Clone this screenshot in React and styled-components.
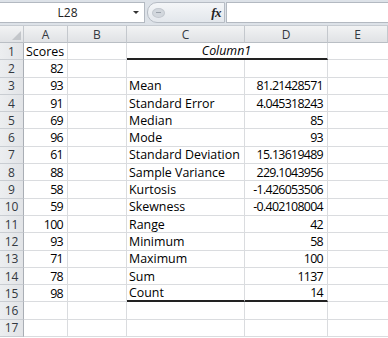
import React from "react";
import styled, { createGlobalStyle } from "styled-components";

const Global = createGlobalStyle`
  html, body { margin: 0; padding: 0; background: #ffffff; }
  body { font-family: "Open Sans", "Noto Sans", sans-serif; overflow: hidden; }
`;

const Page = styled.div`
  width: 388px;
  height: 338px;
  overflow: hidden;
  background: #fff;
`;

const FormulaBar = styled.div`
  height: 26px;
  box-sizing: border-box;
  padding: 2px 0 2px 0;
  display: flex;
  align-items: stretch;
  background: #dde2e8;
  border-bottom: 1px solid #c7ccd2;
`;

const NameBox = styled.div`
  width: 145px;
  box-sizing: border-box;
  background: #fff;
  border: 1px solid #b3b9c1;
  border-left: none;
  display: flex;
  align-items: center;
  font-size: 12px;
  color: #222;
`;

const NameText = styled.span`
  flex: 1;
  text-align: center;
  padding-left: 2px;
`;

const Arrow = styled.span`
  width: 0;
  height: 0;
  border-left: 3px solid transparent;
  border-right: 3px solid transparent;
  border-top: 3px solid #333;
  margin-right: 5px;
`;

const Pill = styled.div`
  width: 78px;
  margin-left: 2px;
  box-sizing: border-box;
  border: 1px solid #b6bcc4;
  border-radius: 10px 0 0 10px;
  background: linear-gradient(#f4f6f8, #e3e7ec);
  display: flex;
  align-items: center;
  justify-content: space-between;
  padding: 0 3px 0 4px;
`;

const Knob = styled.span`
  width: 11px;
  height: 8px;
  border-radius: 50%;
  background: #d2d7dd;
  border: 1px solid #c3c8cf;
  display: flex;
  align-items: center;
  justify-content: center;
  &::after {
    content: "";
    width: 5px;
    height: 1px;
    background: #9aa1aa;
  }
`;

const Fx = styled.span`
  font-family: "Liberation Serif", serif;
  font-style: italic;
  font-weight: bold;
  font-size: 13px;
  color: #222;
  letter-spacing: -0.5px;
`;

const FormulaInput = styled.div`
  flex: 1;
  background: #fff;
  border: 1px solid #b3b9c1;
  border-right: none;
  margin-left: 1px;
`;

const Sheet = styled.div`
  display: grid;
  grid-template-columns: 24px 44px 59px 118px 83px 60px;
  grid-template-rows: 17px repeat(17, 17.3px);
`;

const HeadCell = styled.div`
  box-sizing: border-box;
  background: linear-gradient(#f2f3f4, #e0e2e5);
  border-right: 1px solid #c4c8cd;
  border-bottom: 1px solid #b9bec4;
  display: flex;
  align-items: center;
  justify-content: center;
  font-size: 12px;
  color: #333840;
  position: relative;
`;

const Corner = styled(HeadCell)`
  &::after {
    content: "";
    position: absolute;
    right: 2px;
    bottom: 2px;
    width: 0;
    height: 0;
    border-left: 9px solid transparent;
    border-bottom: 9px solid #c3c6ca;
  }
`;

const RowHead = styled.div`
  box-sizing: border-box;
  background: linear-gradient(90deg, #eceef0, #e2e4e7);
  border-right: 1px solid #a9aeb5;
  border-bottom: 1px solid #c9cdd2;
  display: flex;
  align-items: center;
  justify-content: center;
  font-size: 12px;
  color: #333840;
`;

const Cell = styled.div`
  box-sizing: border-box;
  border-right: ${(p) => (p.$noRight ? "none" : "1px solid #dadcdf")};
  border-bottom: ${(p) => (p.$thick ? "2px solid #222" : "1px solid #dadcdf")};
  display: flex;
  align-items: center;
  justify-content: ${(p) => (p.$align === "right" ? "flex-end" : p.$align === "center" ? "center" : "flex-start")};
  padding: ${(p) => (p.$align === "right" ? "0 4px 0 2px" : "0 3px 0 2px")};
  font-size: 12.4px;
  letter-spacing: ${(p) => (p.$align === "right" ? "-0.7px" : "0")};
  color: #000;
  white-space: nowrap;
  overflow: visible;
  font-style: ${(p) => (p.$italic ? "italic" : "normal")};
  grid-column: ${(p) => p.$span || "auto"};
`;

const scores = [82, 93, 91, 69, 96, 61, 88, 58, 59, 100, 93, 71, 78, 98];
const stats = [
  ["Mean", "81.21428571"],
  ["Standard Error", "4.045318243"],
  ["Median", "85"],
  ["Mode", "93"],
  ["Standard Deviation", "15.13619489"],
  ["Sample Variance", "229.1043956"],
  ["Kurtosis", "-1.426053506"],
  ["Skewness", "-0.402108004"],
  ["Range", "42"],
  ["Minimum", "58"],
  ["Maximum", "100"],
  ["Sum", "1137"],
  ["Count", "14"],
];

export default function App() {
  const rows = [];
  for (let r = 1; r <= 17; r++) {
    const a = r === 1 ? "Scores" : scores[r - 2] !== undefined ? String(scores[r - 2]) : "";
    rows.push(<RowHead key={`h${r}`}>{r}</RowHead>);
    rows.push(
      <Cell key={`a${r}`} $align={r === 1 ? "left" : "right"}>
        {a}
      </Cell>
    );
    rows.push(<Cell key={`b${r}`} />);
    if (r === 1) {
      rows.push(
        <Cell key="c1" $span="span 2" $align="center" $italic $thick>
          Column1
        </Cell>
      );
    } else {
      const s = r >= 3 ? stats[r - 3] : null;
      const thick = r === 15;
      rows.push(
        <Cell key={`c${r}`} $thick={thick}>
          {s ? s[0] : ""}
        </Cell>
      );
      rows.push(
        <Cell key={`d${r}`} $align="right" $thick={thick}>
          {s ? s[1] : ""}
        </Cell>
      );
    }
    rows.push(<Cell key={`e${r}`} $noRight />);
  }

  return (
    <Page>
      <Global />
      <FormulaBar>
        <NameBox>
          <NameText>L28</NameText>
          <Arrow />
        </NameBox>
        <Pill>
          <Knob />
          <Fx>fx</Fx>
        </Pill>
        <FormulaInput />
      </FormulaBar>
      <Sheet>
        <Corner />
        <HeadCell>A</HeadCell>
        <HeadCell>B</HeadCell>
        <HeadCell>C</HeadCell>
        <HeadCell>D</HeadCell>
        <HeadCell>E</HeadCell>
        {rows}
      </Sheet>
    </Page>
  );
}
